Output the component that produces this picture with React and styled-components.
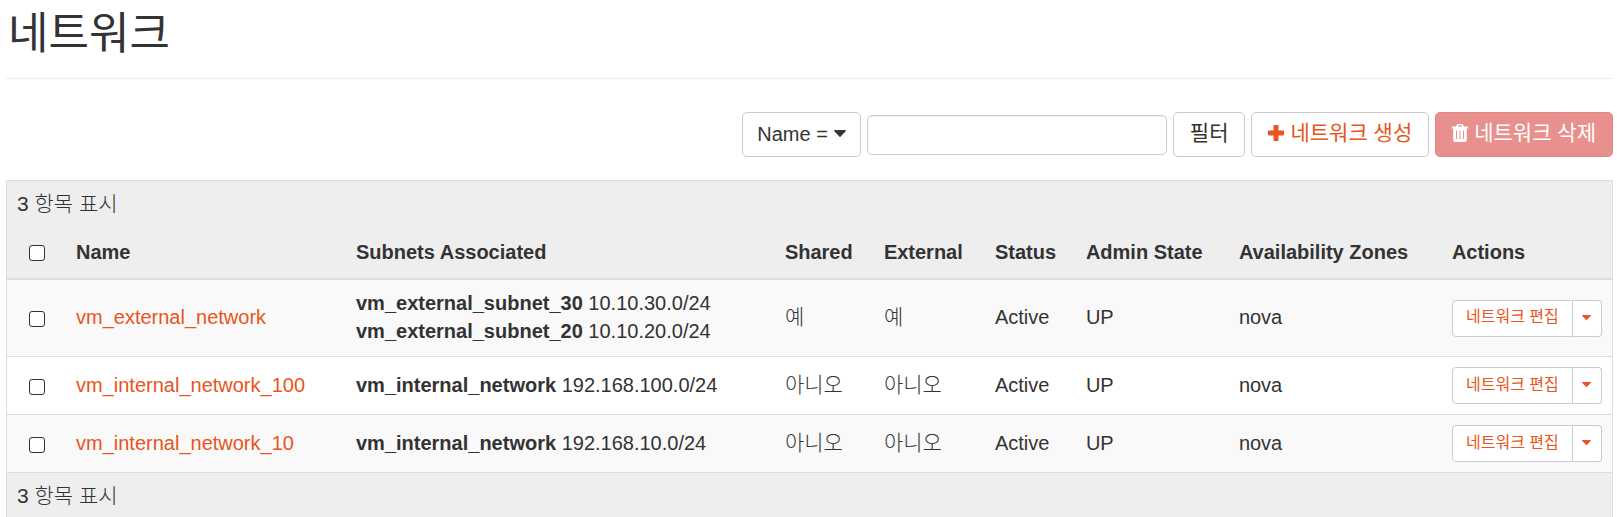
import React from "react";
import styled, { createGlobalStyle, css } from "styled-components";

const GlobalStyle = createGlobalStyle`
  *, *::before, *::after { box-sizing: border-box; }
  body {
    margin: 0;
    background: #fff;
    color: #333;
    font: 300 20px/28px "Liberation Sans", "Noto Sans CJK KR", sans-serif;
  }
  button, input { font: inherit; }
`;

const Page = styled.main`
  padding: 0 4px 0 6px;
  overflow: hidden;
`;

const PageHeader = styled.header`
  height: 79px;
  padding-top: 8px;
  border-bottom: 1px solid #eee;
`;

const Title = styled.h1`
  margin: 0;
  padding-left: 2px;
  font-size: 44px;
  line-height: 52px;
  font-weight: 400;
`;

const Toolbar = styled.form`
  display: flex;
  justify-content: flex-end;
  align-items: center;
  gap: 6px;
  padding: 33px 0 23px;
`;

const Button = styled.button`
  display: inline-flex;
  align-items: center;
  justify-content: center;
  gap: 6px;
  height: 45px;
  padding: ${(p) => (p.$korean ? "0 16px 4px" : "0 14px 2px")};
  border: 1px solid #ccc;
  border-radius: 5px;
  background: #fff;
  color: #333;
  font-size: ${(p) => (p.$korean ? 21 : 20)}px;
  font-weight: 400;
  white-space: nowrap;
  cursor: pointer;
  ${(p) => p.$variant === "link" && css`color: #e95420;`}
  ${(p) => p.$variant === "danger" && css`
    border-color: #e58684;
    background: #e7908e;
    color: #fff;
    cursor: not-allowed;
  `}
`;

const FilterInput = styled.input`
  width: 300px;
  height: 40px;
  padding: 0 12px;
  border: 1px solid #ccc;
  border-radius: 5px;
  background: #fff;
  color: #333;
  box-shadow: inset 0 1px 1px rgba(0, 0, 0, 0.075);
`;

const Table = styled.table`
  width: 100%;
  table-layout: fixed;
  border: 1px solid #ddd;
  border-spacing: 0;
`;

const Col = styled.col`
  width: ${(p) => p.$width || "auto"};
`;

const Summary = styled.td`
  height: 47px;
  padding: 0 10px 2px;
  background: #eee;
  font-size: 21px;
`;

const HeadCell = styled.th`
  height: 52px;
  padding: 0 10px 2px;
  border-bottom: 2px solid #ddd;
  background: #eee;
  text-align: ${(p) => (p.$center ? "center" : "left")};
  white-space: nowrap;
`;

const Row = styled.tr`
  height: 58px;
  background: ${(p) => (p.$striped ? "#f9f9f9" : "#fff")};
`;

const Cell = styled.td`
  padding: 10px;
  border-bottom: 1px solid #ddd;
  white-space: nowrap;
`;

const TextCell = styled(Cell)`
  padding: 9px 10px 11px;
  font-size: ${(p) => (p.$korean ? 21 : 20)}px;
`;

const Check = styled.input`
  appearance: none;
  display: block;
  width: 16px;
  height: 16px;
  margin: 2px auto 0;
  border: 1px solid #333;
  border-radius: 3px;
  background: #fff;
  &:checked { background: #e95420; }
`;

const NameLink = styled.a`
  color: #e95420;
  text-decoration: none;
`;

const Subnets = styled.ul`
  margin: 0;
  padding: 0;
  list-style: none;
`;

const SubnetName = styled.b`
  font-weight: 700;
`;

const ButtonGroup = styled.div`
  display: flex;
  width: 150px;
`;

const SmallButton = styled.button`
  display: flex;
  flex: ${(p) => (p.$toggle ? "0 0 29px" : "1")};
  align-items: center;
  justify-content: center;
  height: 37px;
  padding: 0 0 2px;
  border: 1px solid #ccc;
  border-left-width: ${(p) => (p.$toggle ? 0 : 1)}px;
  border-radius: ${(p) => (p.$toggle ? "0 4px 4px 0" : "4px 0 0 4px")};
  background: #fff;
  color: #e95420;
  font-size: 16px;
  font-weight: 400;
  line-height: 24px;
  white-space: nowrap;
  cursor: pointer;
`;

const columns = [
  ["Name", "280px"],
  ["Subnets Associated"],
  ["Shared", "99px"],
  ["External", "111px"],
  ["Status", "91px"],
  ["Admin State", "153px"],
  ["Availability Zones", "213px"],
  ["Actions", "170px"],
];

const networks = [
  {
    name: "vm_external_network",
    subnets: [
      ["vm_external_subnet_30", "10.10.30.0/24"],
      ["vm_external_subnet_20", "10.10.20.0/24"],
    ],
    shared: "예",
    external: "예",
  },
  {
    name: "vm_internal_network_100",
    subnets: [["vm_internal_network", "192.168.100.0/24"]],
    shared: "아니오",
    external: "아니오",
  },
  {
    name: "vm_internal_network_10",
    subnets: [["vm_internal_network", "192.168.10.0/24"]],
    shared: "아니오",
    external: "아니오",
  },
];

function CaretIcon({ width, height }) {
  return (
    <svg width={width} height={height} viewBox="0 0 12 7" preserveAspectRatio="none" aria-hidden="true">
      <path fill="currentColor" d="M.8 0h10.400q1.200.3.400 1.300L6.700 6.600q-.7.700-1.400 0L.4 1.300Q-.4.300.8 0z" />
    </svg>
  );
}

function PlusIcon() {
  return (
    <svg width="16" height="16" viewBox="0 0 16 16" aria-hidden="true">
      <path
        fill="currentColor"
        d="M6.500 0h3q1 0 1 1v4.500H15q1 0 1 1v3q0 1-1 1h-4.500V15q0 1-1 1h-3q-1 0-1-1v-4.500H1q-1 0-1-1v-3q0-1 1-1h4.500V1q0-1 1-1z"
      />
    </svg>
  );
}

function TrashIcon() {
  return (
    <svg width="16" height="18" viewBox="0 0 16 18" aria-hidden="true">
      <path
        fill="currentColor"
        fillRule="evenodd"
        d="M4 2.500 4.800.8Q5.200 0 6 0h4q.8 0 1.200.8L12 2.500h3.500q.5 0 .5.500v1.500h-1.200V16q0 2-2 2H3.200q-2 0-2-2V4.500H0V3q0-.5.500-.5zM5.800 2.500h4.400l-.5-1.200H6.300zM4 6.500V15h1V6.500zm3.500 0V15h1V6.500zm3.500 0V15h1V6.500z"
      />
    </svg>
  );
}

function NetworkRow({ network, striped }) {
  return (
    <Row $striped={striped}>
      <Cell>
        <Check type="checkbox" aria-label={network.name} />
      </Cell>
      <TextCell>
        <NameLink href="#">{network.name}</NameLink>
      </TextCell>
      <TextCell>
        <Subnets>
          {network.subnets.map(([name, range]) => (
            <li key={name}>
              <SubnetName>{name}</SubnetName> {range}
            </li>
          ))}
        </Subnets>
      </TextCell>
      <TextCell $korean>{network.shared}</TextCell>
      <TextCell $korean>{network.external}</TextCell>
      <TextCell>Active</TextCell>
      <TextCell>UP</TextCell>
      <TextCell>nova</TextCell>
      <Cell>
        <ButtonGroup>
          <SmallButton type="button">네트워크 편집</SmallButton>
          <SmallButton type="button" $toggle aria-label="Actions">
            <CaretIcon width={9} height={5} />
          </SmallButton>
        </ButtonGroup>
      </Cell>
    </Row>
  );
}

export default function App() {
  return (
    <>
      <GlobalStyle />
      <Page>
        <PageHeader>
          <Title>네트워크</Title>
        </PageHeader>
        <Toolbar onSubmit={(e) => e.preventDefault()}>
          <Button type="button">
            Name = <CaretIcon width={12} height={7} />
          </Button>
          <FilterInput type="text" aria-label="Name" />
          <Button type="submit" $korean>필터</Button>
          <Button type="button" $korean $variant="link">
            <PlusIcon />
            네트워크 생성
          </Button>
          <Button type="button" $korean $variant="danger" disabled>
            <TrashIcon />
            네트워크 삭제
          </Button>
        </Toolbar>
        <Table>
          <colgroup>
            <Col $width="59px" />
            {columns.map(([label, width]) => (
              <Col key={label} $width={width} />
            ))}
          </colgroup>
          <thead>
            <tr>
              <Summary colSpan={9}>3 항목 표시</Summary>
            </tr>
            <tr>
              <HeadCell $center>
                <Check type="checkbox" aria-label="Name" />
              </HeadCell>
              {columns.map(([label]) => (
                <HeadCell key={label} scope="col">
                  {label}
                </HeadCell>
              ))}
            </tr>
          </thead>
          <tbody>
            {networks.map((network, i) => (
              <NetworkRow key={network.name} network={network} striped={i % 2 === 0} />
            ))}
          </tbody>
          <tfoot>
            <tr>
              <Summary colSpan={9}>3 항목 표시</Summary>
            </tr>
          </tfoot>
        </Table>
      </Page>
    </>
  );
}
